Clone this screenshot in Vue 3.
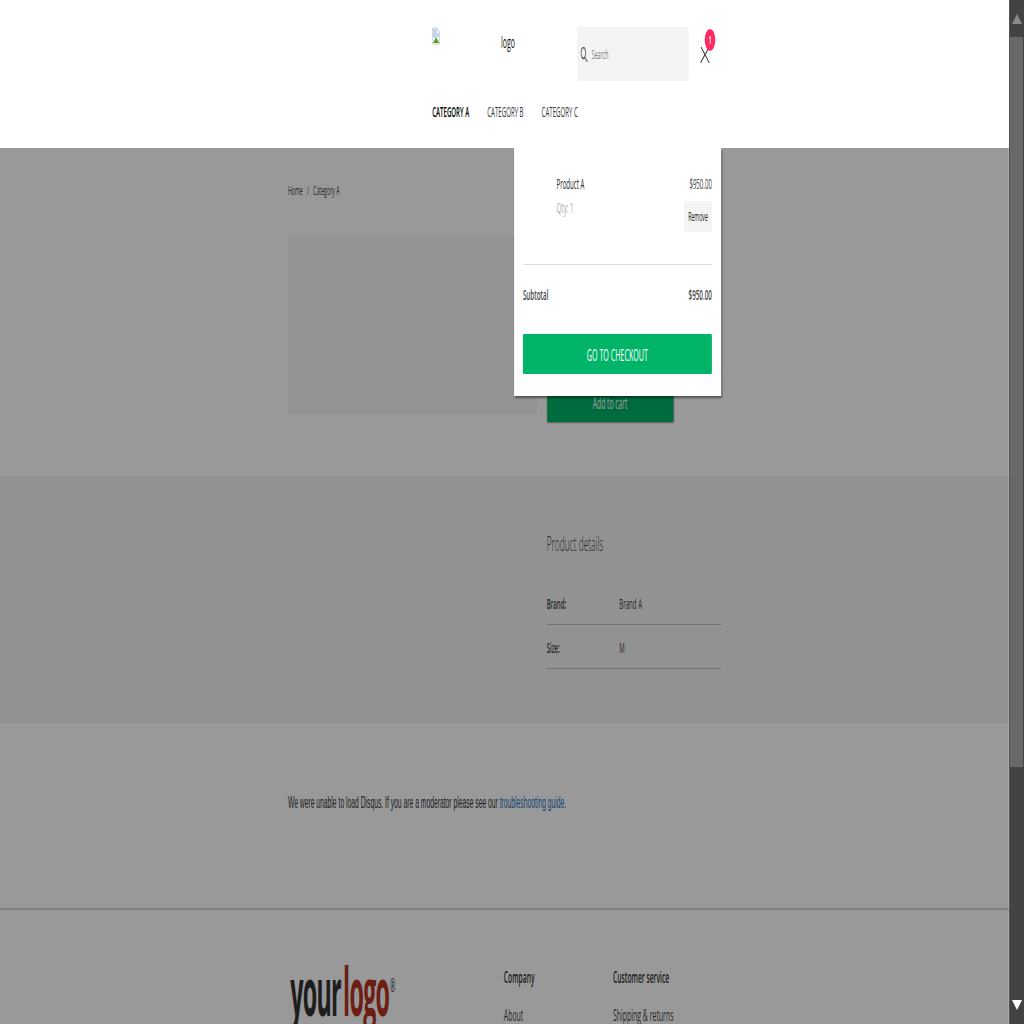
<script setup>
const nav = ['CATEGORY A', 'CATEGORY B', 'CATEGORY C']
const details = [
  { label: 'Brand:', value: 'Brand A' },
  { label: 'Size:', value: 'M' }
]
</script>

<template>
  <div class="screen">
    <div class="viewport">
      <div class="page">
        <header class="header">
          <div class="header-inner">
            <div class="top-row">
              <div class="logo-box">
                <svg class="broken" width="19" height="18" viewBox="0 0 19 18">
                  <path d="M1 1h11l6 5v11H1z" fill="#fff" stroke="#b5b5b5" />
                  <path d="M2 2h10v4h5v4L2 11z" fill="#c4d6f2" />
                  <path d="M2 16l7-6 8 6z" fill="#58a62c" />
                </svg>
                <span class="logo-alt">logo</span>
              </div>
              <div class="search">
                <svg width="20" height="15" viewBox="0 0 20 15" fill="none" stroke="#666" stroke-width="2">
                  <circle cx="8" cy="6" r="5.4" />
                  <path d="M11.5 10.5l6 4.5" />
                </svg>
                <span>Search</span>
              </div>
              <div class="cart">
                <svg width="26" height="16" viewBox="0 0 26 16" fill="none" stroke="#222" stroke-width="1.5">
                  <path d="M3 0l20 16M21 1C17 5 9 10 2 16" />
                </svg>
                <span class="badge">1</span>
              </div>
            </div>
            <nav class="nav">
              <a v-for="(item, i) in nav" :key="item" :class="{ active: i === 0 }">{{ item }}</a>
            </nav>
          </div>
          <div class="cart-menu">
            <div class="cart-item">
              <div class="item-info">
                <div class="item-name">Product A</div>
                <div class="item-qty">Qty: 1</div>
              </div>
              <div class="item-side">
                <div class="item-price">$950.00</div>
                <button class="remove">Remove</button>
              </div>
            </div>
            <div class="subtotal">
              <span>Subtotal</span>
              <span>$950.00</span>
            </div>
            <button class="checkout">GO TO CHECKOUT</button>
          </div>
        </header>

        <main>
          <section class="wrap product">
            <div class="crumbs"><span>Home</span><span class="sep">/</span><span>Category A</span></div>
            <div class="product-grid">
              <div class="photo"></div>
              <div class="buy">
                <button class="add">Add to cart</button>
              </div>
            </div>
          </section>

          <section class="band">
            <div class="wrap band-inner">
              <div class="details">
                <h2>Product details</h2>
                <div v-for="row in details" :key="row.label" class="detail-row">
                  <span class="detail-label">{{ row.label }}</span>
                  <span>{{ row.value }}</span>
                </div>
              </div>
            </div>
          </section>

          <section class="wrap disqus">
            We were unable to load Disqus. If you are a moderator please see our
            <a>troubleshooting guide</a>.
          </section>

          <footer class="footer">
            <div class="wrap footer-inner">
              <div class="brand">
                <div class="brand-mark">
                  <span class="your">your</span><span class="logo-red">logo</span><span class="reg">®</span>
                </div>
              </div>
              <div class="col col-company">
                <h4>Company</h4>
                <a>About</a>
              </div>
              <div class="col">
                <h4>Customer service</h4>
                <a>Shipping &amp; returns</a>
              </div>
            </div>
          </footer>
        </main>

        <div class="overlay"></div>
      </div>
    </div>
    <div class="scrollbar">
      <span class="arrow up"></span>
      <div class="thumb"></div>
      <span class="arrow down"></span>
    </div>
  </div>
</template>

<style>
html, body {
  margin: 0;
  overflow: hidden;
}
</style>

<style scoped>
.screen {
  display: flex;
  width: 1024px;
  height: 1024px;
  overflow: hidden;
  font-family: "Open Sans", "Liberation Sans", sans-serif;
  color: #222;
}

.viewport {
  width: 1009px;
  height: 1024px;
  overflow: hidden;
  background: #fff;
}

/* the shot is squeezed sideways, so lay out wide and scale down */
.page {
  position: relative;
  width: 2402px;
  height: 1024px;
  transform: scaleX(0.42);
  transform-origin: 0 0;
  font-size: 14px;
}

.wrap {
  width: 1031px;
  margin: 0 auto;
}

.scrollbar {
  position: relative;
  width: 15px;
  height: 1024px;
  box-sizing: border-box;
  background: #434343;
  border-left: 1px solid #555;
}

.thumb {
  position: absolute;
  top: 37px;
  left: 0;
  width: 13px;
  height: 730px;
  background: #686868;
}

.arrow {
  position: absolute;
  left: 2px;
  width: 0;
  height: 0;
  border-left: 5px solid transparent;
  border-right: 5px solid transparent;
}

.arrow.up {
  top: 14px;
  border-bottom: 10px solid #8a8a8a;
}

.arrow.down {
  bottom: 14px;
  border-top: 10px solid #fff;
}

.header {
  position: relative;
  z-index: 3;
  height: 148px;
  background: #fff;
}

.header-inner {
  width: 688px;
  margin-left: 1029px;
  padding-top: 27px;
  box-sizing: border-box;
}

.top-row {
  display: flex;
  align-items: flex-start;
}

.logo-box {
  position: relative;
  display: flex;
  width: 345px;
  justify-content: center;
}

.broken {
  position: absolute;
  left: 0;
  top: 0;
}

.logo-alt {
  margin-top: 5px;
  font-size: 16.5px;
  line-height: 20px;
  color: #111;
  transform: translateX(8px);
}

.search {
  display: flex;
  align-items: center;
  gap: 8px;
  width: 266px;
  height: 54px;
  box-sizing: border-box;
  padding-left: 7px;
  background: #f4f4f4;
  border-radius: 3px;
  font-size: 12.5px;
  color: #777;
}

.cart {
  position: relative;
  margin-left: 26px;
  padding-top: 20px;
}

.cart svg {
  display: block;
}

.badge {
  position: absolute;
  top: 2px;
  left: 12px;
  width: 25px;
  height: 22px;
  border-radius: 50%;
  background: #ff2a5f;
  color: #fff;
  font-size: 11px;
  font-weight: 700;
  line-height: 22px;
  text-align: center;
}

.nav {
  display: flex;
  gap: 43px;
  margin-top: 21px;
  font-size: 14.5px;
  line-height: 20px;
  color: #333;
}

.nav .active {
  color: #000;
  font-weight: 600;
}

.cart-menu {
  position: absolute;
  top: 148px;
  left: 1224px;
  width: 493px;
  height: 248px;
  box-sizing: border-box;
  padding: 0 22px 0 21px;
  background: #fff;
  box-shadow: 2px 2px 3px rgba(0, 0, 0, 0.45);
}

.cart-item {
  display: flex;
  justify-content: space-between;
  height: 117px;
  padding: 27px 0 0 80px;
  border-bottom: 1px solid #ddd;
  box-sizing: border-box;
}

.item-name {
  font-size: 14.5px;
  line-height: 18px;
  color: #222;
}

.item-qty {
  margin-top: 5px;
  font-size: 15px;
  line-height: 18px;
  color: #aaa;
}

.item-side {
  display: flex;
  flex-direction: column;
  align-items: flex-end;
}

.item-price {
  font-size: 14.5px;
  line-height: 18px;
  color: #444;
}

.remove {
  width: 66px;
  height: 31px;
  margin-top: 8px;
  padding: 0;
  border: 0;
  background: #f4f4f4;
  font-family: inherit;
  font-size: 12.5px;
  color: #222;
}

.subtotal {
  display: flex;
  justify-content: space-between;
  margin-top: 19px;
  font-size: 15px;
  font-weight: 600;
  line-height: 20px;
  color: #444;
}

.checkout {
  display: block;
  width: 100%;
  height: 40px;
  margin-top: 30px;
  padding: 0;
  border: 0;
  border-radius: 2px;
  background: #00b468;
  color: #fff;
  font-family: inherit;
  font-size: 17px;
}

.product {
  height: 328px;
  box-sizing: border-box;
  padding-top: 34px;
}

.crumbs {
  display: flex;
  gap: 10px;
  font-size: 12.5px;
  line-height: 18px;
  color: #444;
}

.product-grid {
  display: flex;
  gap: 24px;
  margin-top: 35px;
}

.photo {
  width: 593px;
  height: 179px;
  background: #f7f7f7;
}

.buy {
  display: flex;
  align-items: flex-end;
  height: 187px;
}

.add {
  width: 300px;
  height: 37px;
  padding: 0 0 2px;
  border: 0;
  border-radius: 2px;
  background: #00b468;
  box-shadow: 0 1px 2px rgba(0, 0, 0, 0.4);
  color: #fff;
  font-family: inherit;
  font-size: 16px;
}

.band {
  height: 247px;
  background: #f4f4f4;
}

.band-inner {
  display: flex;
  justify-content: flex-end;
}

.details {
  width: 415px;
  padding-top: 54px;
}

.details h2 {
  margin: 0 0 23px;
  font-size: 20px;
  font-weight: 300;
  line-height: 28px;
  color: #444;
}

.detail-row {
  display: flex;
  height: 44px;
  box-sizing: border-box;
  padding-top: 13px;
  border-bottom: 1px solid #c4c4c4;
  font-size: 14.5px;
  line-height: 20px;
  color: #444;
}

.detail-label {
  width: 173px;
  font-weight: 600;
}

.disqus {
  height: 185px;
  box-sizing: border-box;
  padding-top: 69px;
  font-family: "Liberation Sans", Arial, sans-serif;
  font-size: 16.1px;
  line-height: 20px;
  white-space: nowrap;
  color: #333;
}

.disqus a {
  color: #1e6fb8;
}

.footer {
  border-top: 2px solid #d4d4d4;
}

.footer-inner {
  display: flex;
  padding-top: 57px;
}

.brand {
  width: 514px;
  height: 80px;
  margin-top: -17px;
  padding-left: 5px;
  box-sizing: border-box;
}

.brand-mark {
  font-size: 66px;
  font-weight: 700;
  line-height: 80px;
  letter-spacing: -2px;
  white-space: nowrap;
  transform: scaleX(0.84);
  transform-origin: 0 0;
}

.your {
  color: #333;
}

.logo-red {
  margin-left: 6px;
  color: #b5341f;
}

.reg {
  position: relative;
  top: -24px;
  margin-left: 2px;
  font-size: 18px;
  font-weight: 400;
  color: #444;
}

.col {
  display: flex;
  flex-direction: column;
  gap: 18px;
  font-size: 16.5px;
  line-height: 20px;
  color: #444;
}

.col-company {
  width: 260px;
}

.col h4 {
  margin: 0;
  font-size: 16px;
  font-weight: 600;
  color: #333;
}

.overlay {
  position: absolute;
  z-index: 2;
  top: 148px;
  left: 0;
  right: 0;
  bottom: 0;
  background: rgba(0, 0, 0, 0.4);
}
</style>
